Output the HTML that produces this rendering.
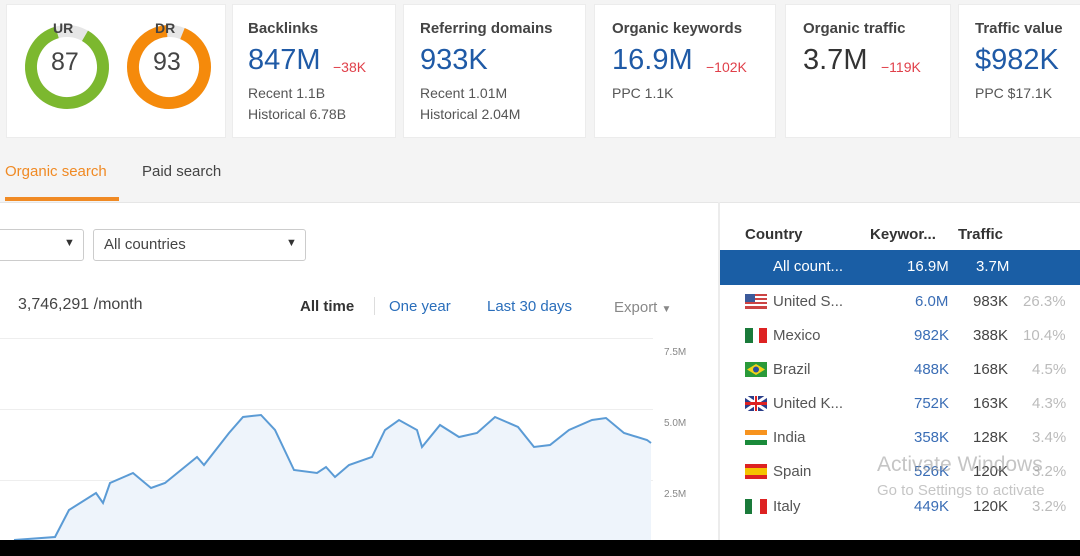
<!DOCTYPE html>
<html><head><meta charset="utf-8"><style>
*{margin:0;padding:0;box-sizing:border-box}
body{width:1080px;height:556px;overflow:hidden;background:#f4f4f4;font-family:"Liberation Sans",sans-serif;position:relative;color:#333}
.a{position:absolute;white-space:nowrap}
.card{position:absolute;top:4px;height:134px;background:#fff;border:1px solid #ececec}
.t{font-size:15px;font-weight:bold;color:#444}
.big{font-size:29px;color:#1f5aa6}
.red{font-size:14px;color:#e0404a}
.s{font-size:14px;color:#555}
.row{position:absolute;left:720px;width:360px;height:34px;font-size:15px}
.row span{position:absolute;top:8px}
.fl{position:absolute;left:25px;top:9px;width:22px;height:15px}
</style></head><body>
<div class="card" style="left:6px;width:220px"></div>
<div class="card" style="left:232px;width:164px"></div>
<div class="card" style="left:403px;width:183px"></div>
<div class="card" style="left:594px;width:182px"></div>
<div class="card" style="left:785px;width:166px"></div>
<div class="card" style="left:958px;width:130px"></div>
<svg class="a" style="left:20px;top:25px" width="200" height="85">
<circle cx="47" cy="42" r="36" fill="none" stroke="#e6e6e6" stroke-width="12"/>
<circle cx="47" cy="42" r="36" fill="none" stroke="#7cb82f" stroke-width="12" stroke-dasharray="197 226" transform="rotate(-60 47 42)"/>
<circle cx="149" cy="42" r="36" fill="none" stroke="#e6e6e6" stroke-width="12"/>
<circle cx="149" cy="42" r="36" fill="none" stroke="#f58a0b" stroke-width="12" stroke-dasharray="210 226" transform="rotate(-68 149 42)"/>
</svg>
<div class="a t" style="left:53px;top:20px;font-size:14px">UR</div>
<div class="a" style="left:51px;top:48px;font-size:25px;color:#444">87</div>
<div class="a t" style="left:155px;top:20px;font-size:14px">DR</div>
<div class="a" style="left:153px;top:48px;font-size:25px;color:#444">93</div>

<div class="a t" style="left:248px;top:20px">Backlinks</div>
<div class="a big" style="left:248px;top:44px">847M</div><div class="a red" style="left:333px;top:59px">−38K</div>
<div class="a s" style="left:248px;top:85px">Recent 1.1B</div><div class="a s" style="left:248px;top:106px">Historical 6.78B</div>

<div class="a t" style="left:420px;top:20px">Referring domains</div>
<div class="a big" style="left:420px;top:44px">933K</div>
<div class="a s" style="left:420px;top:85px">Recent 1.01M</div><div class="a s" style="left:420px;top:106px">Historical 2.04M</div>

<div class="a t" style="left:612px;top:20px">Organic keywords</div>
<div class="a big" style="left:612px;top:44px">16.9M</div><div class="a red" style="left:706px;top:59px">−102K</div>
<div class="a s" style="left:612px;top:85px">PPC 1.1K</div>

<div class="a t" style="left:803px;top:20px">Organic traffic</div>
<div class="a big" style="left:803px;top:44px;color:#333">3.7M</div><div class="a red" style="left:881px;top:59px">−119K</div>

<div class="a t" style="left:975px;top:20px">Traffic value</div>
<div class="a big" style="left:975px;top:44px">$982K</div>
<div class="a s" style="left:975px;top:85px">PPC $17.1K</div>

<div class="a" style="left:5px;top:163px;font-size:15px;color:#f08a24">Organic search</div>
<div class="a" style="left:5px;top:197px;width:114px;height:4px;background:#f08a24"></div>
<div class="a" style="left:142px;top:163px;font-size:15px;color:#444">Paid search</div>

<div class="a" style="left:0;top:202px;width:1080px;height:340px;background:#fff;border-top:1px solid #e6e6e6"></div>
<div class="a" style="left:718px;top:202px;width:2px;height:340px;background:#ececec"></div>

<div class="a" style="left:-4px;top:229px;width:88px;height:32px;border:1px solid #ccc;border-radius:3px"></div>
<div class="a" style="left:64px;top:237px;font-size:11px">▼</div>
<div class="a" style="left:93px;top:229px;width:213px;height:32px;border:1px solid #ccc;border-radius:3px"></div>
<div class="a" style="left:104px;top:236px;font-size:15px;color:#444">All countries</div>
<div class="a" style="left:286px;top:237px;font-size:11px">▼</div>

<div class="a" style="left:18px;top:296px;font-size:16px;color:#444">3,746,291 /month</div>
<div class="a" style="left:300px;top:298px;font-size:15px;font-weight:bold;color:#333">All time</div>
<div class="a" style="left:374px;top:297px;width:1px;height:18px;background:#ddd"></div>
<div class="a" style="left:389px;top:298px;font-size:15px;color:#2a6ebb">One year</div>
<div class="a" style="left:487px;top:298px;font-size:15px;color:#2a6ebb">Last 30 days</div>
<div class="a" style="left:614px;top:299px;font-size:15px;color:#888">Export <span style="font-size:10px">▼</span></div>

<div class="a" style="left:0;top:338px;width:653px;height:1px;background:#eee"></div>
<div class="a" style="left:0;top:409px;width:653px;height:1px;background:#eee"></div>
<div class="a" style="left:0;top:480px;width:653px;height:1px;background:#eee"></div>
<div class="a" style="left:664px;top:347px;font-size:10px;color:#888">7.5M</div>
<div class="a" style="left:664px;top:418px;font-size:10px;color:#888">5.0M</div>
<div class="a" style="left:664px;top:489px;font-size:10px;color:#888">2.5M</div>
<svg class="a" style="left:0;top:0" width="720" height="556">
<path d="M14,540 L55,537 L69,510 L96,493 L103,503 L110,483 L133,473 L151,488 L165,483 L197,457 L204,465 L229,433 L243,417 L261,415 L275,430 L294,470 L317,473 L326,467 L335,477 L349,465 L372,457 L385,430 L399,420 L417,430 L422,447 L440,425 L459,437 L477,433 L495,417 L518,427 L534,447 L550,445 L569,430 L592,420 L606,418 L624,433 L647,440 L651,443 L651,540 Z" fill="#eef4fb"/>
<path d="M14,540 L55,537 L69,510 L96,493 L103,503 L110,483 L133,473 L151,488 L165,483 L197,457 L204,465 L229,433 L243,417 L261,415 L275,430 L294,470 L317,473 L326,467 L335,477 L349,465 L372,457 L385,430 L399,420 L417,430 L422,447 L440,425 L459,437 L477,433 L495,417 L518,427 L534,447 L550,445 L569,430 L592,420 L606,418 L624,433 L647,440 L651,443" fill="none" stroke="#5b9bd5" stroke-width="2"/>
</svg>

<div class="a" style="left:745px;top:226px;font-size:15px;font-weight:bold;color:#333">Country</div>
<div class="a" style="left:870px;top:226px;font-size:15px;font-weight:bold;color:#333">Keywor...</div>
<div class="a" style="left:958px;top:226px;font-size:15px;font-weight:bold;color:#333">Traffic</div>
<div class="row" style="top:250px;background:#1a5ea5;color:#fff;height:35px"><span style="left:53px">All count...</span><span style="left:187px">16.9M</span><span style="left:256px">3.7M</span></div>
<div class="row" style="top:285px"><svg class="fl" viewBox="0 0 22 15"><rect width="22" height="15" fill="#c44"/><rect y="2" width="22" height="2" fill="#fff"/><rect y="6" width="22" height="2" fill="#fff"/><rect y="10" width="22" height="2" fill="#fff"/><rect width="10" height="8" fill="#3c5a9a"/></svg><span style="left:53px;color:#555">United S...</span><span style="left:195px;color:#3a6db5">6.0M</span><span style="left:253px;color:#444">983K</span><span style="left:303px;color:#bbb">26.3%</span></div>
<div class="row" style="top:319px"><svg class="fl" viewBox="0 0 22 15"><rect width="8" height="15" fill="#1a7a3a"/><rect x="8" width="6" height="15" fill="#fff"/><rect x="14" width="8" height="15" fill="#d22"/></svg><span style="left:53px;color:#555">Mexico</span><span style="left:194px;color:#3a6db5">982K</span><span style="left:253px;color:#444">388K</span><span style="left:303px;color:#bbb">10.4%</span></div>
<div class="row" style="top:353px"><svg class="fl" viewBox="0 0 22 15"><rect width="22" height="15" fill="#2a9a3a"/><path d="M11,2 L20,7.5 L11,13 L2,7.5Z" fill="#f3d21a"/><circle cx="11" cy="7.5" r="3" fill="#2a4fa0"/></svg><span style="left:53px;color:#555">Brazil</span><span style="left:194px;color:#3a6db5">488K</span><span style="left:253px;color:#444">168K</span><span style="left:312px;color:#bbb">4.5%</span></div>
<div class="row" style="top:387px"><svg class="fl" viewBox="0 0 22 15"><rect width="22" height="15" fill="#2a3e8a"/><path d="M0,0L22,15M22,0L0,15" stroke="#fff" stroke-width="3"/><rect x="9" width="4" height="15" fill="#fff"/><rect y="6" width="22" height="3" fill="#d22"/><rect x="10" width="2" height="15" fill="#d22"/></svg><span style="left:53px;color:#555">United K...</span><span style="left:194px;color:#3a6db5">752K</span><span style="left:253px;color:#444">163K</span><span style="left:312px;color:#bbb">4.3%</span></div>
<div class="row" style="top:421px"><svg class="fl" viewBox="0 0 22 15"><rect width="22" height="5" fill="#f7931e"/><rect y="5" width="22" height="5" fill="#fff"/><rect y="10" width="22" height="5" fill="#1a8a3a"/></svg><span style="left:53px;color:#555">India</span><span style="left:194px;color:#3a6db5">358K</span><span style="left:253px;color:#444">128K</span><span style="left:312px;color:#bbb">3.4%</span></div>
<div class="row" style="top:455px"><svg class="fl" viewBox="0 0 22 15"><rect width="22" height="15" fill="#d22"/><rect y="4" width="22" height="7" fill="#f5c400"/></svg><span style="left:53px;color:#555">Spain</span><span style="left:194px;color:#3a6db5">526K</span><span style="left:253px;color:#444">120K</span><span style="left:312px;color:#bbb">3.2%</span></div>
<div class="row" style="top:490px"><svg class="fl" viewBox="0 0 22 15"><rect width="7" height="15" fill="#1a7a3a"/><rect x="7" width="8" height="15" fill="#fff"/><rect x="15" width="7" height="15" fill="#d22"/></svg><span style="left:53px;color:#555">Italy</span><span style="left:194px;color:#3a6db5">449K</span><span style="left:253px;color:#444">120K</span><span style="left:312px;color:#bbb">3.2%</span></div>
<div class="a" style="left:877px;top:453px;font-size:21px;color:rgba(150,150,150,.55)">Activate Windows</div>
<div class="a" style="left:877px;top:482px;font-size:15px;color:rgba(150,150,150,.55)">Go to Settings to activate</div>
<div class="a" style="left:0;top:540px;width:1080px;height:16px;background:#000"></div>
</body></html>
